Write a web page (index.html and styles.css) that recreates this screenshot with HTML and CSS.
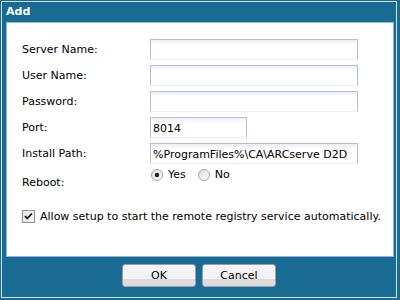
FILE: index.html
```html
<!DOCTYPE html>
<html>
<head>
<meta charset="utf-8">
<link rel="stylesheet" href="styles.css">
</head>
<body>
<div class="frame">
  <div class="title">Add</div>
  <div class="panel">
    <div class="form">
      <div class="label">Server Name:</div>
      <div class="field wide"></div>
      <div class="label">User Name:</div>
      <div class="field wide"></div>
      <div class="label">Password:</div>
      <div class="field wide"></div>
      <div class="label">Port:</div>
      <div class="field port">8014</div>
      <div class="label">Install Path:</div>
      <div class="field wide">%ProgramFiles%\CA\ARCserve D2D</div>
      <div class="label reboot">Reboot:</div>
      <div class="radios">
        <span class="radio-item">
          <svg class="radio" width="12" height="12" viewBox="0 0 12 12"><defs><linearGradient id="rg" x1="0" y1="0" x2="1" y2="1"><stop offset="0" stop-color="#dcdcdc"/><stop offset="1" stop-color="#ffffff"/></linearGradient></defs><circle cx="6" cy="6" r="5.5" fill="url(#rg)" stroke="#a2a6b6"/><circle cx="6" cy="6" r="2.2" fill="#222"/></svg>
          Yes
        </span>
        <span class="radio-item">
          <svg class="radio" width="12" height="12" viewBox="0 0 12 12"><circle cx="6" cy="6" r="5.5" fill="url(#rg)" stroke="#a2a6b6"/></svg>
          No
        </span>
      </div>
    </div>
    <div class="check-row">
      <svg class="check" width="13" height="13" viewBox="0 0 13 13"><defs><linearGradient id="cg" x1="0" y1="0" x2="1" y2="1"><stop offset="0" stop-color="#dedede"/><stop offset="1" stop-color="#ffffff"/></linearGradient></defs><rect x="0.5" y="0.5" width="12" height="12" fill="url(#cg)" stroke="#8e8f9e"/><path d="M3 6 L5.2 8.5 L10 3.5" fill="none" stroke="#111" stroke-width="1.8"/></svg>
      <span>Allow setup to start the remote registry service automatically.</span>
    </div>
  </div>
  <div class="footer">
    <div class="btn">OK</div>
    <div class="btn">Cancel</div>
  </div>
</div>
</body>
</html>
```

FILE: styles.css
```css
html, body {
  margin: 0;
  padding: 0;
}
body {
  width: 400px;
  height: 300px;
  background: #196b93;
  padding: 1px;
  box-sizing: border-box;
  font-family: "DejaVu Sans", sans-serif;
  font-size: 11px;
  color: #000;
}
.frame {
  width: 396px;
  height: 297px;
  box-sizing: border-box;
  border: 1px solid #d4e3ef;
  display: flex;
  flex-direction: column;
}
.title {
  height: 20px;
  line-height: 19px;
  padding-left: 4px;
  color: #fff;
  font-weight: bold;
  font-size: 11px;
}
.panel {
  margin: 0 2px 0 4px;
  height: 235px;
  box-sizing: border-box;
  background: #fff;
  border: 1px solid #8fb4e2;
  padding: 16px 0 0 15px;
}
.form {
  display: grid;
  grid-template-columns: 128px 1fr;
  row-gap: 5px;
}
.label {
  align-self: center;
  line-height: 14px;
  padding-top: 1px;
}
.label.reboot {
  padding-top: 6px;
}
.field {
  height: 21px;
  box-sizing: border-box;
  border: 1px solid #b7bdd4;
  border-bottom-color: #eceef4;
  background: linear-gradient(#eceef5, #ffffff 5px);
  padding: 4px 0 0 2px;
  line-height: 14px;
  white-space: nowrap;
  overflow: hidden;
}
.field.wide {
  width: 208px;
}
.field.port {
  width: 97px;
}
.radios {
  display: flex;
  gap: 12px;
  height: 22px;
  align-items: flex-start;
  padding-left: 1px;
}
.radio-item {
  display: flex;
  align-items: center;
  gap: 5px;
  line-height: 12px;
}
.radio {
  display: block;
}
.check-row {
  display: flex;
  align-items: center;
  gap: 5px;
  margin-top: 19px;
}
.check {
  display: block;
}
.footer {
  display: flex;
  justify-content: center;
  gap: 6px;
  padding-top: 7px;
}
.btn {
  width: 74px;
  height: 23px;
  box-sizing: border-box;
  border: 1px solid #9a9ca6;
  border-radius: 3px;
  background: linear-gradient(#f7f5f7 0, #f3f1f3 14px, #dcdcdc 14px, #dcdcdc 100%);
  text-align: center;
  line-height: 21px;
}
```
